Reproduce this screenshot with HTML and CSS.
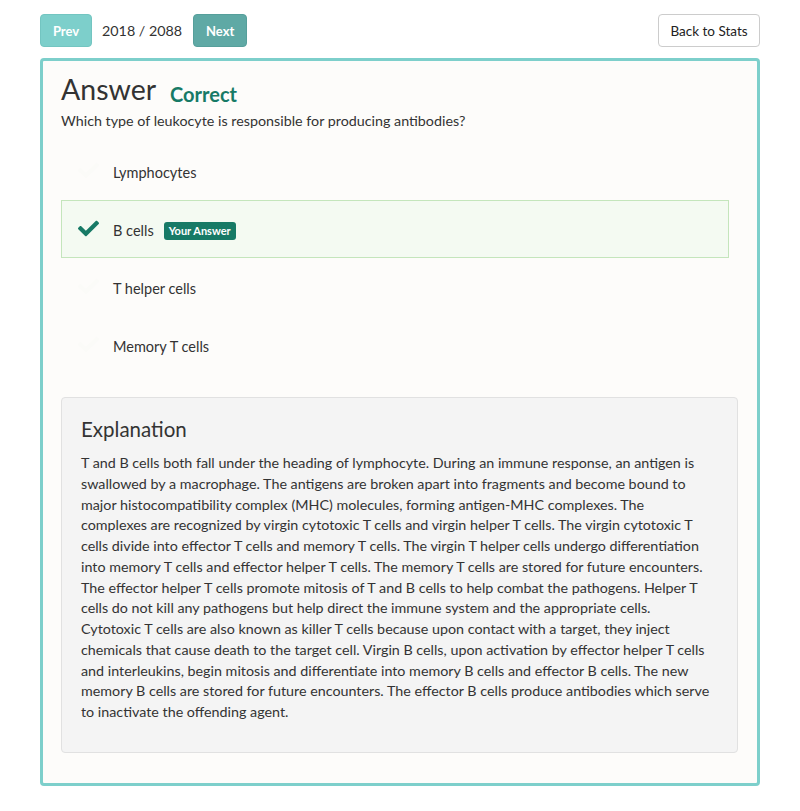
FILE: index.html
```html
<!DOCTYPE html>
<html>
<head>
<meta charset="utf-8">
<link rel="stylesheet" href="styles.css">
</head>
<body>
<div class="page">
  <div class="nav">
    <div class="nav-left">
      <button class="btn btn-prev">Prev</button>
      <span class="counter">2018 / 2088</span>
      <button class="btn btn-next">Next</button>
    </div>
    <button class="btn btn-back">Back to Stats</button>
  </div>
  <div class="card">
    <div class="title-row">
      <h1 class="title">Answer</h1>
      <span class="status">Correct</span>
    </div>
    <p class="question">Which type of leukocyte is responsible for producing antibodies?</p>
    <ul class="options">
      <li class="option">
        <svg class="check faint" viewBox="0 0 512 512"><path d="M173.9 439.4L7.5 273c-10-10-10-26.2 0-36.2l36.2-36.2c10-10 26.2-10 36.2 0L192 312.7 432.1 72.6c10-10 26.2-10 36.2 0l36.2 36.2c10 10 10 26.2 0 36.2L210.1 439.4c-10 10-26.2 10-36.2 0z"/></svg>
        <span>Lymphocytes</span>
      </li>
      <li class="option selected">
        <svg class="check" viewBox="0 0 512 512"><path d="M173.9 439.4L7.5 273c-10-10-10-26.2 0-36.2l36.2-36.2c10-10 26.2-10 36.2 0L192 312.7 432.1 72.6c10-10 26.2-10 36.2 0l36.2 36.2c10 10 10 26.2 0 36.2L210.1 439.4c-10 10-26.2 10-36.2 0z"/></svg>
        <span>B cells</span>
        <span class="badge">Your Answer</span>
      </li>
      <li class="option">
        <svg class="check faint" viewBox="0 0 512 512"><path d="M173.9 439.4L7.5 273c-10-10-10-26.2 0-36.2l36.2-36.2c10-10 26.2-10 36.2 0L192 312.7 432.1 72.6c10-10 26.2-10 36.2 0l36.2 36.2c10 10 10 26.2 0 36.2L210.1 439.4c-10 10-26.2 10-36.2 0z"/></svg>
        <span>T helper cells</span>
      </li>
      <li class="option">
        <svg class="check faint" viewBox="0 0 512 512"><path d="M173.9 439.4L7.5 273c-10-10-10-26.2 0-36.2l36.2-36.2c10-10 26.2-10 36.2 0L192 312.7 432.1 72.6c10-10 26.2-10 36.2 0l36.2 36.2c10 10 10 26.2 0 36.2L210.1 439.4c-10 10-26.2 10-36.2 0z"/></svg>
        <span>Memory T cells</span>
      </li>
    </ul>
    <div class="explanation">
      <h2 class="exp-title">Explanation</h2>
      <p class="exp-text">T and B cells both fall under the heading of lymphocyte. During an immune response, an antigen is swallowed by a macrophage. The antigens are broken apart into fragments and become bound to major histocompatibility complex (MHC) molecules, forming antigen-MHC complexes. The complexes are recognized by virgin cytotoxic T cells and virgin helper T cells. The virgin cytotoxic T cells divide into effector T cells and memory T cells. The virgin T helper cells undergo differentiation into memory T cells and effector helper T cells. The memory T cells are stored for future encounters. The effector helper T cells promote mitosis of T and B cells to help combat the pathogens. Helper T cells do not kill any pathogens but help direct the immune system and the appropriate cells. Cytotoxic T cells are also known as killer T cells because upon contact with a target, they inject chemicals that cause death to the target cell. Virgin B cells, upon activation by effector helper T cells and interleukins, begin mitosis and differentiate into memory B cells and effector B cells. The new memory B cells are stored for future encounters. The effector B cells produce antibodies which serve to inactivate the offending agent.</p>
    </div>
  </div>
</div>
</body>
</html>
```

FILE: styles.css
```css
* { box-sizing: border-box; }
html, body { margin: 0; padding: 0; background: #ffffff; }
body {
  font-family: Lato, "Open Sans", "Liberation Sans", sans-serif;
  color: #333333;
  font-size: 14px;
  line-height: 20px;
}
.page {
  width: 720px;
  margin: 0 0 0 40px;
  padding-top: 14px;
}
.nav {
  display: flex;
  justify-content: space-between;
  align-items: center;
  height: 33px;
}
.nav-left {
  display: flex;
  align-items: center;
}
.btn {
  font-family: Lato, "Open Sans", "Liberation Sans", sans-serif;
  height: 33px;
  border-radius: 4px;
  border: 1px solid transparent;
  padding: 0 10px;
  font-size: 13px;
  cursor: pointer;
}
.btn-prev {
  background: #7dcfcb;
  border-color: #73c5c1;
  color: #fff;
  font-weight: 700;
  width: 52px;
}
.btn-next {
  background: #5fa9a5;
  border-color: #569f9b;
  color: #fff;
  font-weight: 700;
  width: 54px;
}
.counter {
  font-size: 14.3px;
  margin: 0 11px 0 10px;
  color: #333;
}
.btn-back {
  background: #fff;
  border-color: #cccccc;
  color: #222;
  font-size: 13.5px;
  width: 102px;
  padding: 0;
}
.card {
  margin-top: 11px;
  border: 3px solid #7dcfcb;
  border-radius: 4px;
  background: #fdfcfa;
  padding: 11px 19px 30px 18px;
  height: 728px;
}
.title-row {
  display: flex;
  align-items: baseline;
}
.title {
  margin: 0;
  font-size: 28.5px;
  font-weight: 400;
  line-height: 34px;
  color: #333;
}
.status {
  margin-left: 14px;
  font-size: 20px;
  font-weight: 700;
  color: #177a66;
  position: relative;
  top: 2px;
}
.question {
  margin: 5px 0 0 0;
  font-size: 14.3px;
}
.options {
  list-style: none;
  margin: 11px 9px 0 0;
  padding: 0;
}
.option {
  display: flex;
  align-items: center;
  height: 58px;
  padding: 4px 16px 0 16px;
  border: 1px solid transparent;
  font-size: 14.5px;
}
.option.selected {
  background: #f4faf2;
  border-color: #c4e5bc;
}
.check {
  width: 21px;
  height: 21px;
  fill: #177a66;
  margin-right: 14px;
  position: relative;
  top: -3px;
}
.check.faint { fill: #fbfbf8; }
.badge {
  margin-left: 10px;
  background: #177a66;
  color: #fff;
  font-size: 11px;
  font-weight: 700;
  line-height: 18px;
  padding: 0 5px;
  border-radius: 3px;
}
.explanation {
  margin-top: 23px;
  background: #f4f4f4;
  border: 1px solid #e1e1e1;
  border-radius: 4px;
  padding: 17px 25px 30px 19px;
  height: 356px;
}
.exp-title {
  margin: 0;
  font-size: 20.5px;
  font-weight: 400;
  line-height: 28px;
  color: #333;
}
.exp-text {
  margin: 10px 0 0 0;
  font-size: 14.3px;
  line-height: 20.75px;
}
```
